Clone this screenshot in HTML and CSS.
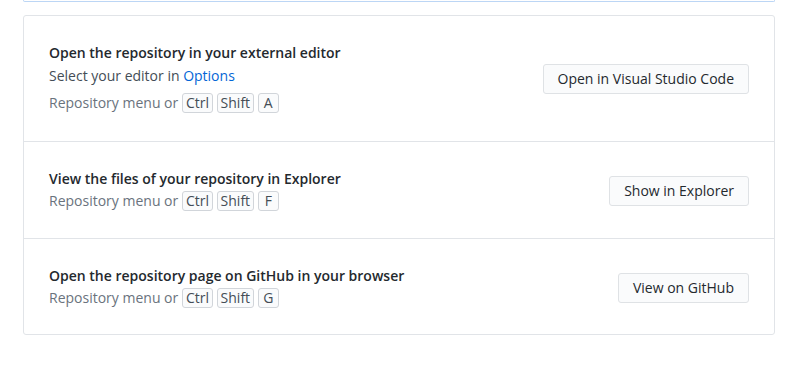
FILE: index.html
```html
<!DOCTYPE html>
<html lang="en">
<head>
    <meta charset="UTF-8">
    <title>Repository actions</title>
    <link rel="stylesheet" href="styles.css">
</head>
<body>
    <div class="top-box"></div>

    <div class="actions">
        <div class="action-row">
            <div class="action-text">
                <div class="action-title">Open the repository in your external editor</div>
                <div class="action-sub">Select your editor in <a href="#" class="link">Options</a></div>
                <div class="shortcut">Repository menu or <kbd>Ctrl</kbd> <kbd>Shift</kbd> <kbd>A</kbd></div>
            </div>
            <button class="button">Open in Visual Studio Code</button>
        </div>

        <div class="action-row">
            <div class="action-text">
                <div class="action-title">View the files of your repository in Explorer</div>
                <div class="shortcut">Repository menu or <kbd>Ctrl</kbd> <kbd>Shift</kbd> <kbd>F</kbd></div>
            </div>
            <button class="button">Show in Explorer</button>
        </div>

        <div class="action-row">
            <div class="action-text">
                <div class="action-title">Open the repository page on GitHub in your browser</div>
                <div class="shortcut">Repository menu or <kbd>Ctrl</kbd> <kbd>Shift</kbd> <kbd>G</kbd></div>
            </div>
            <button class="button">View on GitHub</button>
        </div>
    </div>
</body>
</html>
```

FILE: styles.css
```css
body {
    font-family: 'Open Sans', 'Noto Sans', sans-serif;
    font-size: 14px;
    color: #24292e;
    background-color: white;
    margin: 0;
    padding: 0 29px 0 23px;
}

.top-box {
    height: 1px;
    border: 1px solid #bcd6f5;
    border-top: none;
    border-radius: 0 0 3px 3px;
}

.actions {
    margin-top: 13px;
    border: 1px solid #e1e4e8;
    border-radius: 3px;
}

.action-row {
    display: flex;
    justify-content: space-between;
    align-items: center;
    padding: 27px 25px 26px 25px;
    border-bottom: 1px solid #e1e4e8;
}

.action-row:first-child {
    padding-bottom: 27px;
}

.action-row:last-child {
    padding-bottom: 25px;
    border-bottom: none;
}

.action-text {
    display: flex;
    flex-direction: column;
}

.action-title {
    font-weight: 600;
    line-height: 20px;
}

.action-sub {
    color: #444d56;
    line-height: 24px;
    margin-top: 1px;
    margin-bottom: 3px;
}

.link {
    color: #0366d6;
    text-decoration: none;
}

.shortcut {
    color: #6a737d;
    line-height: 22px;
    margin-top: 1px;
}

kbd {
    font-family: inherit;
    font-size: 14px;
    color: #444d56;
    background-color: #fafbfc;
    border: 1px solid #d1d5da;
    border-radius: 3px;
    padding: 0 3px;
    min-width: 21px;
    box-sizing: border-box;
    text-align: center;
    display: inline-block;
    line-height: 18px;
}

.button {
    font-family: inherit;
    font-size: 14px;
    color: #24292e;
    background-color: #fafbfc;
    border: 1px solid #dfe2e5;
    border-radius: 3px;
    height: 30px;
    padding: 0 14px;
    cursor: pointer;
}
```
